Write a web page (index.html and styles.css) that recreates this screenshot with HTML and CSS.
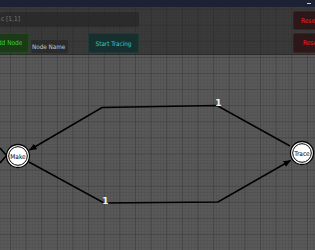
FILE: index.html
```html
<!DOCTYPE html>
<html>
<head>
<meta charset="utf-8">
<link rel="stylesheet" href="styles.css">
</head>
<body>
<div class="app">
  <svg class="graph" width="315" height="250" viewBox="0 0 315 250">
    <defs>
      <marker id="arr" markerWidth="8" markerHeight="8" refX="7" refY="4" orient="auto" markerUnits="userSpaceOnUse">
        <path d="M0,0.8 L7.5,4 L0,7.2 Z" fill="#000"/>
      </marker>
    </defs>
    <polyline class="edge" points="290,146 217,105.5 102,107.5 29.5,150" marker-end="url(#arr)"/>
    <polyline class="edge" points="29,162 104,203 218,202 290.5,160.5" marker-end="url(#arr)"/>
    <polyline class="edge" points="0,148 6.5,155.5 0,163"/>
    <text class="lbl" x="218.5" y="106">1</text>
    <text class="lbl" x="105.5" y="203.5">1</text>
    <g class="node">
      <circle cx="18" cy="156" r="11.5" class="ring"/>
      <circle cx="18" cy="156" r="9.3" class="core"/>
      <text x="18" y="158.5">Make</text>
    </g>
    <g class="node">
      <circle cx="302" cy="153" r="11.5" class="ring"/>
      <circle cx="302" cy="153" r="9.3" class="core"/>
      <text x="302" y="155.5">Trace</text>
    </g>
  </svg>
  <div class="topbar"><span class="dash"></span></div>
  <div class="panel">
    <div class="row row1">
      <div class="field">c [1,1]</div>
      <div class="btn reset r1">Reset</div>
    </div>
    <div class="row row2">
      <div class="btn add">Add Node</div>
      <div class="input">Node Name</div>
      <div class="btn trace">Start Tracing</div>
      <div class="btn reset r2">Reset</div>
    </div>
  </div>
</div>
</body>
</html>
```
FILE: styles.css
```css
html, body {
  margin: 0;
  padding: 0;
  overflow: hidden;
}
body {
  width: 315px;
  height: 250px;
  font-family: "DejaVu Sans Condensed", "DejaVu Sans", sans-serif;
}
.app {
  position: relative;
  width: 315px;
  height: 250px;
  overflow: hidden;
  background-color: #595959;
  background-image:
    linear-gradient(to right, #454545 1px, transparent 1px),
    linear-gradient(to bottom, #474747 1px, transparent 1px),
    linear-gradient(to right, rgba(0,0,0,0.07) 1px, transparent 1px),
    linear-gradient(to bottom, rgba(0,0,0,0.07) 1px, transparent 1px);
  background-size: 15.63px 16.1px, 15.63px 16.1px, 3.126px 3.22px, 3.126px 3.22px;
  background-position: 10px 8.7px, 10px 8.7px, 10px 8.7px, 10px 8.7px;
}
.graph {
  position: absolute;
  left: 0;
  top: 0;
}
.edge {
  fill: none;
  stroke: #000;
  stroke-width: 1.5;
}
.lbl {
  fill: #f2f2f2;
  font-family: "DejaVu Sans", sans-serif;
  font-weight: bold;
  font-size: 9px;
  text-anchor: middle;
}
.node .ring {
  fill: #fff;
  stroke: #000;
  stroke-width: 1.3;
}
.node .core {
  fill: #fff;
  stroke: #000;
  stroke-width: 1;
}
.node text {
  font-family: "DejaVu Sans Condensed", "DejaVu Sans", sans-serif;
  font-size: 6.5px;
  fill: #000;
  text-anchor: middle;
}
.topbar {
  position: relative;
  height: 7px;
  background: #1c2234;
}
.dash {
  position: absolute;
  right: 4px;
  top: 3px;
  width: 4px;
  height: 1px;
  background: #cfd3de;
}
.panel {
  position: relative;
  height: 48px;
  background: rgba(28, 28, 28, 0.5);
  border-bottom: 1px solid #2c2c2c;
  display: flex;
  flex-direction: column;
  padding-top: 4px;
  box-sizing: border-box;
  gap: 3px;
}
.row {
  display: flex;
  align-items: flex-end;
  position: relative;
}
.row1 {
  height: 19px;
}
.row2 {
  height: 20px;
}
.field {
  align-self: flex-start;
  margin-top: 1px;
  width: 139px;
  height: 15px;
  background: rgba(40, 40, 40, 0.8);
  border-radius: 2px;
  color: #7a7a7a;
  font-size: 6.5px;
  line-height: 15px;
  padding-left: 1px;
  box-sizing: border-box;
}
.btn {
  height: 20px;
  box-sizing: border-box;
  border-radius: 2px;
  font-size: 6.5px;
  display: flex;
  align-items: center;
  justify-content: center;
  white-space: nowrap;
}
.add {
  margin-left: -8px;
  width: 37px;
  background: #1c3a18;
  border: 1px solid #234a20;
  color: #2fd62f;
  justify-content: flex-start;
  padding-left: 1px;
}
.input {
  margin-left: 2px;
  width: 37px;
  height: 13px;
  background: #2b2b2b;
  border-radius: 2px;
  color: #c9c9c9;
  font-size: 6.3px;
  line-height: 13px;
  padding-left: 1px;
  box-sizing: border-box;
  white-space: nowrap;
}
.trace {
  margin-left: 20px;
  width: 51px;
  background: #17302f;
  border: 1px solid #1e3b3a;
  color: #27d0cc;
  font-size: 6.3px;
}
.reset {
  position: absolute;
  left: 293px;
  width: 36px;
  background: #2e1718;
  border: 1px solid #3a2020;
  color: #ff1a1a;
  justify-content: flex-start;
}
.r1 {
  top: 0;
  height: 19px;
  padding-left: 7px;
}
.r2 {
  top: 0;
  padding-left: 9px;
}
```
